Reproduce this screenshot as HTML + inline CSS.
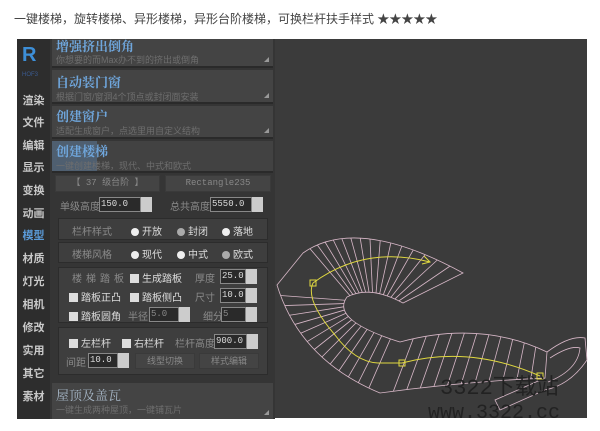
<!DOCTYPE html>
<html><head><meta charset="utf-8"><style>
*{margin:0;padding:0;box-sizing:border-box}
body{width:600px;height:431px;background:#fff;position:relative;overflow:hidden;font-family:"Liberation Sans","Noto Sans CJK SC",sans-serif}
.a{position:absolute;white-space:nowrap}
#hd{left:14px;top:10px;font-size:12px;color:#444}
#side{left:17px;top:39px;width:33px;height:380px;background:#2d2d2d}
#pan{left:50px;top:39px;width:225px;height:380px;background:#353535}
#vp{left:275px;top:39px;width:312px;height:379px;background:#3b3b3b}
.nav{left:17px;width:33px;text-align:center;font-size:11px;color:#c8c8c8;font-weight:bold}
.sec{left:52px;width:221px;background:#444;border-bottom:2px solid #2a2a2a}
.t{font-size:13px;color:#6fa6dc;font-family:"Noto Serif CJK SC",serif;font-weight:bold;position:absolute;left:4px}
.s{font-size:9px;color:#6e6e6e;position:absolute;left:4px}
.tri{position:absolute;right:4px;bottom:4px;width:0;height:0;border-left:5px solid transparent;border-bottom:5px solid #999}
.btn{background:#444;border:1px solid #3a3a3a;color:#888;font-size:9px;text-align:center;font-family:"Liberation Mono",monospace}
.lb{font-size:10px;color:#8a8a8a}
.lw{font-size:10px;color:#ddd}
.inp{background:#2a2a2a;border:1px solid #888;color:#ddd;font-size:9px;font-family:"Liberation Mono",monospace;height:15px;padding-left:1px;line-height:13px}
.sp{background:#ccc;width:11px;height:15px}
.grp{background:#3e3e3e;border:1px solid #2c2c2c}
.rd{display:inline-block;width:8px;height:8px;border-radius:50%;background:#eee;vertical-align:-1px;margin-right:3px}
.ck{display:inline-block;width:9px;height:9px;background:#ddd;vertical-align:-1px;margin-right:3px}
</style></head><body>
<div class="a" id="hd">一键楼梯，旋转楼梯、异形楼梯，异形台阶楼梯，可换栏杆扶手样式 ★★★★★</div>
<div class="a" id="side"></div>
<div class="a" id="pan"></div>
<div class="a" id="vp"></div>
<div class="a" style="left:22px;top:44px;font-size:20px;font-weight:bold;color:#3d8fd8">R</div>
<div class="a" style="left:22px;top:72px;font-size:6px;color:#3a5a90">HOF3</div>
<div class="a nav" style="top:92px">渲染</div>
<div class="a nav" style="top:114px">文件</div>
<div class="a nav" style="top:137px">编辑</div>
<div class="a nav" style="top:159px">显示</div>
<div class="a nav" style="top:182px">变换</div>
<div class="a nav" style="top:205px">动画</div>
<div class="a nav" style="top:227px;color:#5a9ad8">模型</div>
<div class="a nav" style="top:250px">材质</div>
<div class="a nav" style="top:273px">灯光</div>
<div class="a nav" style="top:296px">相机</div>
<div class="a nav" style="top:319px">修改</div>
<div class="a nav" style="top:342px">实用</div>
<div class="a nav" style="top:365px">其它</div>
<div class="a nav" style="top:388px">素材</div>

<div class="a sec" style="top:39px;height:29px"><div class="t" style="top:-3px">增强挤出倒角</div><div class="s" style="top:14px">你想要的而Max办不到的挤出或倒角</div><div class="tri"></div></div>
<div class="a sec" style="top:70px;height:34px"><div class="t" style="top:2px">自动装门窗</div><div class="s" style="top:20px">根据门窗/窗洞4个顶点或封闭面安装</div><div class="tri"></div></div>
<div class="a sec" style="top:106px;height:33px"><div class="t" style="top:0px">创建窗户</div><div class="s" style="top:18px">适配生成窗户，点选里用自定义结构</div><div class="tri"></div></div>
<div class="a sec" style="top:141px;height:32px;background:#424242"><div style="position:absolute;left:0;top:0;width:45px;height:30px;background:#4f5f70"></div><div class="t" style="top:0px">创建楼梯</div><div class="s" style="top:18px">一键创建楼梯，现代、中式和欧式</div></div>

<div class="a btn" style="left:55px;top:175px;width:105px;height:17px;line-height:15px">【 37 级台阶 】</div>
<div class="a btn" style="left:165px;top:175px;width:106px;height:17px;line-height:15px">Rectangle235</div>
<div class="a lb" style="left:60px;top:198px">单级高度</div>
<div class="a inp" style="left:99px;top:197px;width:42px">150.0</div><div class="a sp" style="left:141px;top:197px"></div>
<div class="a lb" style="left:170px;top:198px">总共高度</div>
<div class="a inp" style="left:210px;top:197px;width:42px">5550.0</div><div class="a sp" style="left:252px;top:197px"></div>

<div class="a grp" style="left:58px;top:218px;width:210px;height:22px"></div>
<div class="a lb" style="left:72px;top:223px">栏杆样式</div>
<div class="a lw" style="left:131px;top:223px"><span class="rd"></span>开放</div>
<div class="a lw" style="left:177px;top:223px"><span class="rd" style="background:#aaa"></span>封闭</div>
<div class="a lw" style="left:222px;top:223px"><span class="rd"></span>落地</div>
<div class="a grp" style="left:58px;top:242px;width:210px;height:21px"></div>
<div class="a lb" style="left:72px;top:246px">楼梯风格</div>
<div class="a lw" style="left:131px;top:246px"><span class="rd"></span>现代</div>
<div class="a lw" style="left:177px;top:246px"><span class="rd"></span>中式</div>
<div class="a lw" style="left:222px;top:246px"><span class="rd" style="background:#aaa"></span>欧式</div>

<div class="a grp" style="left:58px;top:267px;width:210px;height:56px"></div>
<div class="a lb" style="left:72px;top:270px;letter-spacing:4px">楼梯踏板</div>
<div class="a lw" style="left:130px;top:270px"><span class="ck"></span>生成踏板</div>
<div class="a lb" style="left:195px;top:270px">厚度</div>
<div class="a inp" style="left:220px;top:269px;width:26px">25.0</div><div class="a sp" style="left:246px;top:269px"></div>
<div class="a lw" style="left:69px;top:289px"><span class="ck"></span>踏板正凸</div>
<div class="a lw" style="left:130px;top:289px"><span class="ck"></span>踏板侧凸</div>
<div class="a lb" style="left:195px;top:289px">尺寸</div>
<div class="a inp" style="left:220px;top:288px;width:26px">10.0</div><div class="a sp" style="left:246px;top:288px"></div>
<div class="a lw" style="left:69px;top:308px"><span class="ck"></span>踏板圆角</div>
<div class="a lb" style="left:128px;top:308px">半径</div>
<div class="a inp" style="left:149px;top:307px;width:30px;color:#888">5.0</div><div class="a sp" style="left:179px;top:307px"></div>
<div class="a lb" style="left:203px;top:308px">细分</div>
<div class="a inp" style="left:221px;top:307px;width:25px;color:#888">5</div><div class="a sp" style="left:246px;top:307px"></div>

<div class="a grp" style="left:58px;top:327px;width:210px;height:48px"></div>
<div class="a lw" style="left:69px;top:335px"><span class="ck"></span>左栏杆</div>
<div class="a lw" style="left:122px;top:335px"><span class="ck"></span>右栏杆</div>
<div class="a lb" style="left:175px;top:335px">栏杆高度</div>
<div class="a inp" style="left:214px;top:334px;width:33px">900.0</div><div class="a sp" style="left:247px;top:334px"></div>
<div class="a lb" style="left:66px;top:354px">间距</div>
<div class="a inp" style="left:88px;top:353px;width:30px">10.0</div><div class="a sp" style="left:118px;top:353px"></div>
<div class="a btn" style="left:135px;top:353px;width:60px;height:16px;line-height:14px;font-family:inherit">线型切换</div>
<div class="a btn" style="left:199px;top:353px;width:60px;height:16px;line-height:14px;font-family:inherit">样式编辑</div>

<div class="a sec" style="top:383px;height:36px;border:none"><div class="t" style="top:2px;font-weight:normal;color:#a8b8c8">屋顶及盖瓦</div><div class="s" style="top:20px">一键生成两种屋顶，一键铺瓦片</div><div class="tri"></div></div>

<svg class="a" style="left:0;top:0" width="600" height="431">
<g fill="none" stroke="#d8b8c8" stroke-width="0.8" id="st">
<path d="M277 285 L303 253 Q357 215 463 273 L403 303 Q370 285 347 297 Q330 320 400 342 Q480 320 547 352 L545 378 Q460 382 380 393 Q300 360 277 285 Z"/>
<path d="M547 352 Q570 335 585 338 L587 360 Q570 385 545 390 L500 410 L495 400 L545 378"/>
<path d="M550 358 Q570 345 580 348 Q578 370 548 382"/>
</g>
<g fill="none" stroke="#e0d840" stroke-width="1">
<path d="M313 283 Q365 245 430 262 M424 256 L430 262 L422 264 M313 283 Q305 300 335 335 Q355 362 378 363 L402 363 Q470 345 540 376"/>
<rect x="310" y="280" width="6" height="6"/><rect x="399" y="360" width="6" height="6"/><rect x="537" y="373" width="6" height="6"/>
</g>
<text x="440" y="394" font-size="22" fill="#222" font-family="Liberation Mono,Noto Sans CJK SC,monospace">3322下载站</text>
<text x="428" y="418" font-size="20" fill="#222" font-family="Liberation Mono,monospace">www.3322.cc</text>
</svg>
<script>
var g=document.getElementById('st'),h='';
function q(a,b,c,t){var u=1-t;return[u*u*a[0]+2*u*t*b[0]+t*t*c[0],u*u*a[1]+2*u*t*b[1]+t*t*c[1]]}
function fan(o1,o2,o3,i1,i2,i3,n){for(var i=1;i<n;i++){var t=i/n;var o=q(o1,o2,o3,t),m=q(i1,i2,i3,t);h+='<line x1="'+o[0]+'" y1="'+o[1]+'" x2="'+m[0]+'" y2="'+m[1]+'"/>';}}
fan([303,253],[357,215],[463,273],[347,297],[370,285],[403,303],16);
fan([277,285],[300,360],[380,393],[347,297],[330,320],[400,342],14);
fan([380,393],[460,382],[545,378],[400,342],[480,320],[547,352],12);
g.innerHTML+=h;
</script>
</body></html>
